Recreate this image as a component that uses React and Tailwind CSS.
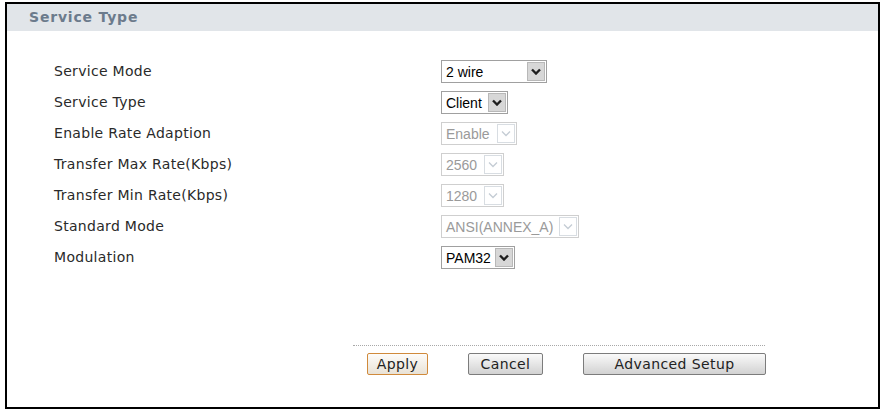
import React from "react";

const rows = [
  { label: "Service Mode", value: "2 wire", width: "w-[106px]" },
  { label: "Service Type", value: "Client", width: "w-[67px]" },
  { label: "Enable Rate Adaption", value: "Enable", width: "w-[76px]", disabled: true },
  { label: "Transfer Max Rate(Kbps)", value: "2560", width: "w-[63px]", disabled: true },
  { label: "Transfer Min Rate(Kbps)", value: "1280", width: "w-[63px]", disabled: true },
  { label: "Standard Mode", value: "ANSI(ANNEX_A)", width: "w-[138px]", disabled: true },
  { label: "Modulation", value: "PAM32", width: "w-[74px]" },
];

const Chevron = ({ disabled }) => (
  <svg width="10" height="7" viewBox="0 0 10 7">
    <path
      d="M1 1.5 L5 5.5 L9 1.5"
      fill="none"
      stroke={disabled ? "#c4ccd4" : "#1e1e1e"}
      strokeWidth={disabled ? "1.3" : "2.4"}
    />
  </svg>
);

const FakeSelect = ({ value, width, disabled }) => (
  <div
    className={`${width} h-[23px] flex items-center justify-between border pl-[4px] pr-[1px] bg-white ${
      disabled ? "border-[#cfcfcf] text-[#9a9a9a]" : "border-[#a0a0a0] text-black"
    }`}
    style={{ fontFamily: '"Liberation Sans", Arial, sans-serif', fontSize: "14px" }}
  >
    <span className="whitespace-nowrap leading-none">{value}</span>
    <div
      className={`w-[18px] h-[19px] shrink-0 flex items-center justify-center border ${
        disabled ? "border-[#d8dde2] bg-white" : "border-[#b8b8b8] bg-[#d7d7d7]"
      }`}
    >
      <Chevron disabled={disabled} />
    </div>
  </div>
);

const Btn = ({ children, width, primary }) => (
  <button
    className={`${width} h-[22px] rounded-[2px] border text-[14px] tracking-[0.4px] text-[#222] leading-none bg-gradient-to-b ${
      primary
        ? "border-[#d08a3c] from-[#fdfcfa] to-[#e9e2d6]"
        : "border-[#7c7c7c] from-[#fafafa] to-[#d2d2d2]"
    }`}
    style={{ fontFamily: '"DejaVu Sans", Verdana, sans-serif' }}
  >
    {children}
  </button>
);

export default function App() {
  return (
    <div className="w-[881px] h-[412px] bg-white pt-[2px] pl-[5px]">
      <div
        className="w-[875px] h-[407px] border-2 border-black flex flex-col"
        style={{ fontFamily: '"DejaVu Sans", Verdana, sans-serif' }}
      >
        <div className="h-[27px] bg-[#e1e5e9] flex items-center pl-[22px] text-[14px] tracking-[0.8px] font-bold text-[#6c7b8c]">
          Service Type
        </div>
        <div className="pt-[25px] pl-[47px]">
          {rows.map((r) => (
            <div key={r.label} className="h-[31px] flex items-center">
              <div className="w-[387px] text-[14px] tracking-[0.3px] text-[#2a2a2a]">{r.label}</div>
              <FakeSelect value={r.value} width={r.width} disabled={r.disabled} />
            </div>
          ))}
        </div>
        <div className="mt-[72px] ml-[346px] w-[412px] border-t border-dotted border-[#a8a8a8]" />
        <div className="mt-[7px] ml-[360px] flex items-center">
          <Btn width="w-[61px]" primary>Apply</Btn>
          <div className="w-[40px]" />
          <Btn width="w-[75px]">Cancel</Btn>
          <div className="w-[40px]" />
          <Btn width="w-[183px]">Advanced Setup</Btn>
        </div>
      </div>
    </div>
  );
}
